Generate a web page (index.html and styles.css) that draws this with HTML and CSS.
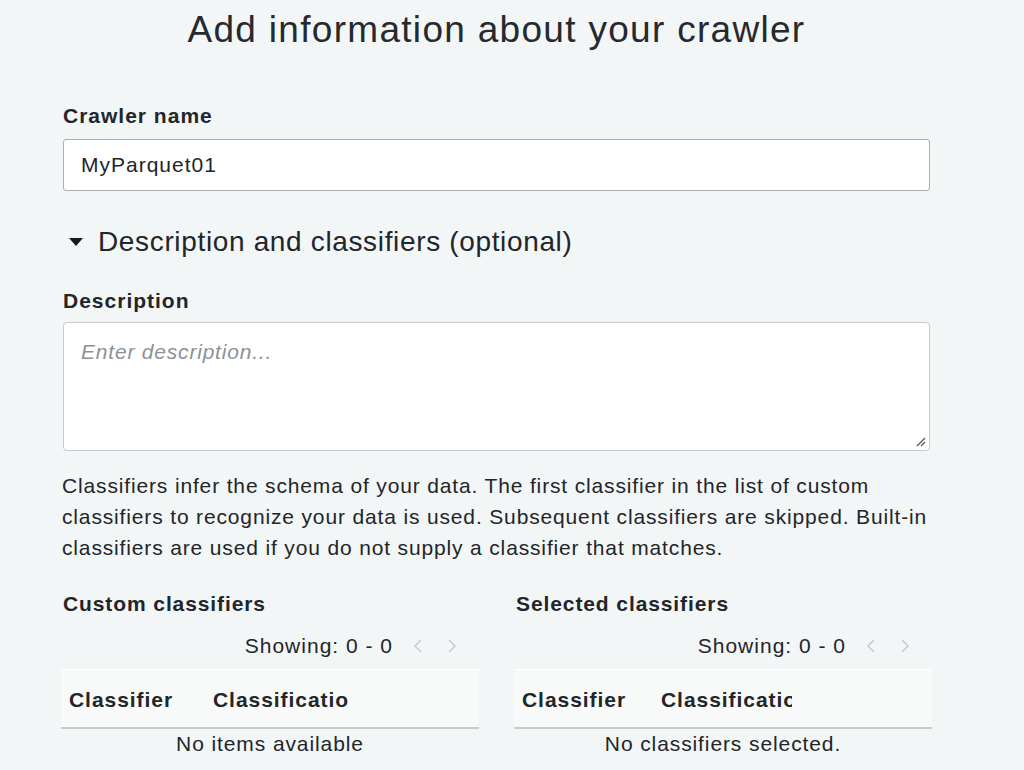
FILE: index.html
```html
<!DOCTYPE html>
<html>
<head>
<meta charset="utf-8">
<link rel="stylesheet" href="styles.css">
</head>
<body>
<main class="page">
  <h1 class="title">Add information about your crawler</h1>

  <label class="field-label">Crawler name</label>
  <div class="text-input">MyParquet01</div>

  <div class="expander">
    <svg class="caret" width="16" height="10" viewBox="0 0 16 10"><path d="M1 1 L15 1 L8 9 Z" fill="#16191f"/></svg>
    <span>Description and classifiers (optional)</span>
  </div>

  <label class="field-label desc-label">Description</label>
  <div class="textarea">
    <span class="placeholder">Enter description...</span>
    <svg class="grip" width="12" height="12" viewBox="0 0 12 12"><path d="M11 3 L3 11 M11 7 L7 11" stroke="#555" stroke-width="1.3"/></svg>
  </div>

  <p class="help">Classifiers infer the schema of your data. The first classifier in the list of custom<br>classifiers to recognize your data is used. Subsequent classifiers are skipped. Built-in<br>classifiers are used if you do not supply a classifier that matches.</p>

  <div class="columns">
    <section class="col">
      <h2 class="col-title">Custom classifiers</h2>
      <div class="pager">
        <span>Showing: 0 - 0</span>
        <svg class="chev" width="12" height="16" viewBox="0 0 12 16"><path d="M9 2 L3 8 L9 14" fill="none" stroke="#c9cdd0" stroke-width="1.6"/></svg>
        <svg class="chev" width="12" height="16" viewBox="0 0 12 16"><path d="M3 2 L9 8 L3 14" fill="none" stroke="#c9cdd0" stroke-width="1.6"/></svg>
      </div>
      <div class="thead">
        <div class="th th1">Classifier</div>
        <div class="th th2">Classificatio</div>
      </div>
      <div class="empty">No items available</div>
    </section>
    <section class="col">
      <h2 class="col-title">Selected classifiers</h2>
      <div class="pager">
        <span>Showing: 0 - 0</span>
        <svg class="chev" width="12" height="16" viewBox="0 0 12 16"><path d="M9 2 L3 8 L9 14" fill="none" stroke="#c9cdd0" stroke-width="1.6"/></svg>
        <svg class="chev" width="12" height="16" viewBox="0 0 12 16"><path d="M3 2 L9 8 L3 14" fill="none" stroke="#c9cdd0" stroke-width="1.6"/></svg>
      </div>
      <div class="thead">
        <div class="th th1 th1b">Classifier</div>
        <div class="th th2 th2b">Classificatio</div>
      </div>
      <div class="empty">No classifiers selected.</div>
    </section>
  </div>
</main>
</body>
</html>
```
FILE: styles.css
```css
html, body {
  margin: 0;
  padding: 0;
  background: #f3f6f7;
  font-family: "Liberation Sans", Arial, sans-serif;
  color: #222529;
}
.page {
  width: 867px;
  margin-left: 63px;
  display: flex;
  flex-direction: column;
}
.title {
  margin: 0;
  height: 60px;
  line-height: 60px;
  font-size: 37px;
  font-weight: 400;
  letter-spacing: 1.3px;
  text-align: center;
  color: #26292d;
}
.field-label {
  display: block;
  margin-top: 44px;
  line-height: 24px;
  font-size: 21px;
  font-weight: 700;
  letter-spacing: 1px;
}
.desc-label { margin-top: 29px; }
.text-input {
  margin-top: 11px;
  box-sizing: border-box;
  height: 52px;
  border: 1px solid #a9aeb2;
  border-radius: 3px;
  background: #fff;
  padding: 0 17px;
  display: flex;
  align-items: center;
  font-size: 21px;
  letter-spacing: 1px;
}
.expander {
  margin-top: 33px;
  height: 36px;
  display: flex;
  align-items: center;
  gap: 14px;
  padding-left: 5px;
  font-size: 28px;
  letter-spacing: 0.65px;
}
.caret { flex: none; }
.textarea {
  margin-top: 9px;
  box-sizing: border-box;
  height: 129px;
  border: 1px solid #c8cbcd;
  border-radius: 4px;
  background: #fff;
  padding: 17px 17px;
  position: relative;
}
.placeholder {
  font-size: 21px;
  font-style: italic;
  color: #8d9195;
  letter-spacing: 0.8px;
}
.grip {
  position: absolute;
  right: 3px;
  bottom: 3px;
}
.help {
  margin: 19px 0 0 -1px;
  font-size: 21px;
  line-height: 31px;
  letter-spacing: 0.85px;
  width: 940px;
}
.columns {
  margin-top: 29px;
  margin-left: -2px;
  display: grid;
  grid-template-columns: 418px 418px;
  column-gap: 35px;
}
.col-title {
  margin: 0;
  padding-left: 2px;
  line-height: 24px;
  font-size: 21px;
  font-weight: 700;
  letter-spacing: 0.9px;
}
.pager {
  margin-top: 18px;
  height: 24px;
  display: flex;
  align-items: center;
  justify-content: flex-end;
  padding-right: 21px;
  gap: 22px;
  font-size: 21px;
  letter-spacing: 1px;
}
.pager span { margin-right: -3px; }
.thead {
  margin-top: 11px;
  box-sizing: border-box;
  height: 60px;
  padding-top: 3px;
  background: #f8fafa;
  border-top: 1px solid #ffffff;
  border-bottom: 2px solid #c9cccf;
  display: flex;
  align-items: center;
}
.th {
  font-size: 21px;
  font-weight: 700;
  letter-spacing: 0.95px;
  white-space: nowrap;
  overflow: hidden;
}
.th1 { width: 152px; padding-left: 8px; box-sizing: border-box; }
.th2 { width: 140px; }
.th1b { width: 147px; }
.th2b { width: 131px; }
.empty {
  line-height: 24px;
  margin-top: 3px;
  text-align: center;
  font-size: 21px;
  letter-spacing: 0.9px;
}
```
